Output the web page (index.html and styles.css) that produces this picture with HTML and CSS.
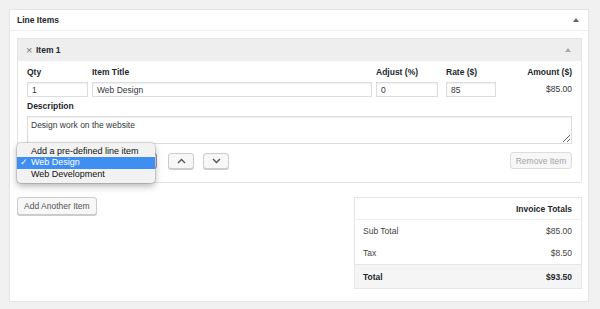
FILE: index.html
```html
<!DOCTYPE html>
<html lang="en">
<head>
    <meta charset="UTF-8">
    <meta name="viewport" content="width=device-width, initial-scale=1.0">
    <title>Line Items</title>
    <link rel="stylesheet" href="styles.css">
</head>
<body>
    <div class="panel">
        <div class="panel-head">
            <h2>Line Items</h2>
            <span class="toggle"></span>
        </div>
        <div class="panel-body">
            <div class="item">
                <div class="item-head">
                    <span class="remove-x">&times;</span>
                    <h3>Item 1</h3>
                    <span class="toggle light"></span>
                </div>
                <div class="item-body">
                    <div class="fields">
                        <label class="field"><span>Qty</span><input type="text" value="1"></label>
                        <label class="field"><span>Item Title</span><input type="text" value="Web Design"></label>
                        <label class="field adjust"><span>Adjust (%)</span><input type="text" value="0"></label>
                        <label class="field"><span>Rate ($)</span><input type="text" value="85"></label>
                        <div class="field amount"><span>Amount ($)</span><div class="amount-val">$85.00</div></div>
                    </div>
                    <label class="field desc"><span>Description</span><textarea>Design work on the website</textarea></label>
                    <div class="item-actions">
                        <div class="select">
                            <!-- the open menu covers the select's own label -->
                            <ul class="menu">
                                <li>Add a pre-defined line item</li>
                                <li class="active"><span class="check">&#10003;</span>Web Design</li>
                                <li>Web Development</li>
                            </ul>
                        </div>
                        <button class="btn move">
                            <svg width="9" height="6" viewBox="0 0 9 6"><polyline points="1,5 4.5,1.5 8,5" fill="none" stroke="#555" stroke-width="1.4"/></svg>
                        </button>
                        <button class="btn move">
                            <svg width="9" height="6" viewBox="0 0 9 6"><polyline points="1,1 4.5,4.5 8,1" fill="none" stroke="#555" stroke-width="1.4"/></svg>
                        </button>
                        <button class="btn disabled remove">Remove Item</button>
                    </div>
                </div>
            </div>

            <div class="footer-row">
                <button class="btn add">Add Another Item</button>
                <table class="totals">
                    <thead>
                        <tr><th colspan="2">Invoice Totals</th></tr>
                    </thead>
                    <tbody>
                        <tr><td>Sub Total</td><td class="num">$85.00</td></tr>
                        <tr><td>Tax</td><td class="num">$8.50</td></tr>
                        <tr class="grand"><td>Total</td><td class="num">$93.50</td></tr>
                    </tbody>
                </table>
            </div>
        </div>
    </div>
</body>
</html>
```

FILE: styles.css
```css
body {
    margin: 0;
    padding: 9px 0 0 9px;
    background-color: #f1f1f1;
    font-family: 'Liberation Sans', Arial, sans-serif;
    font-size: 8.5px;
    color: #23282d;
}
.panel {
    width: 580px;
    box-sizing: border-box;
    background-color: #ffffff;
    border: 1px solid #e5e5e5;
    box-shadow: 0 1px 1px rgba(0,0,0,0.04);
}
.panel-head {
    height: 20px;
    display: flex;
    align-items: center;
    justify-content: space-between;
    padding: 0 9px 0 7px;
    border-bottom: 1px solid #eeeeee;
}
h2, h3 {
    margin: 0;
    font-size: 8.5px;
    font-weight: bold;
}
.toggle {
    width: 0;
    height: 0;
    border-left: 3px solid transparent;
    border-right: 3px solid transparent;
    border-bottom: 4px solid #666;
}
.toggle.light {
    border-bottom-color: #aaa;
}
.panel-body {
    padding: 7px 6px 12px 7px;
}
.item {
    border: 1px solid #e5e5e5;
}
.item-head {
    height: 22px;
    display: flex;
    align-items: center;
    padding: 0 10px 0 8px;
    background-color: #eeeeee;
}
.item-head h3 {
    flex: 1;
}
.remove-x {
    width: 10px;
    color: #777;
    font-size: 11px;
    line-height: 1;
    margin-top: 1px;
}
.item-body {
    padding: 6px 9px 13px 9px;
}
.fields {
    display: grid;
    grid-template-columns: 61px 280px 66px 50px 1fr;
    column-gap: 4px;
}
.field {
    display: flex;
    flex-direction: column;
}
.field span {
    font-weight: bold;
    line-height: 11px;
    margin-bottom: 4px;
}
.field.adjust input {
    width: 62px;
}
.amount {
    align-items: flex-end;
}
.amount-val {
    line-height: 15px;
    color: #32373c;
}
input, textarea {
    height: 15px;
    margin: 0;
    padding: 0 4px;
    border: 1px solid #dddddd;
    box-shadow: inset 0 1px 2px rgba(0,0,0,0.07);
    box-sizing: border-box;
    font-family: inherit;
    font-size: 8.5px;
    color: #32373c;
    outline: none;
}
.desc {
    margin-top: 4px;
}
textarea {
    height: 28px;
    padding: 3px 3px;
    resize: vertical;
}
.item-actions {
    margin-top: 8px;
    height: 17px;
    display: flex;
    align-items: center;
}
.select {
    position: relative;
    width: 130px;
    height: 16px;
    box-sizing: border-box;
    border: 1px solid #bbb;
    border-right-color: #999;
    border-radius: 3px;
    background-color: #fff;
    margin-right: 11px;
}
.menu {
    position: absolute;
    left: -11px;
    top: -11px;
    width: 138px;
    margin: 0;
    padding: 3px 0;
    list-style: none;
    background-color: #f2f2f2;
    border-radius: 4px;
    box-shadow: 0 0 0 1px rgba(0,0,0,0.12), 0 3px 7px rgba(0,0,0,0.3);
    font-size: 9px;
    color: #111;
}
.menu li {
    position: relative;
    height: 11.5px;
    line-height: 11.5px;
    padding-left: 14px;
}
.menu li.active {
    background-color: #3f8ef2;
    color: #fff;
}
.check {
    position: absolute;
    left: 3px;
    top: 0;
}
.btn {
    height: 17px;
    padding: 0 7px;
    background-color: #f7f7f7;
    border: 1px solid #cccccc;
    border-radius: 3px;
    box-shadow: 0 1px 0 #cccccc;
    font-family: inherit;
    font-size: 8.5px;
    color: #555;
    cursor: pointer;
}
.btn.move {
    width: 26px;
    height: 16px;
    margin-right: 9px;
    display: flex;
    align-items: center;
    justify-content: center;
}
.btn.remove {
    margin-left: auto;
    width: 62px;
    padding: 0;
}
.btn.disabled {
    color: #a0a5aa;
    border-color: #dddddd;
    box-shadow: none;
}
.footer-row {
    margin-top: 14px;
    display: flex;
    justify-content: space-between;
    align-items: flex-start;
}
.btn.add {
    height: 18px;
    padding: 0 6px;
}
.totals {
    width: 228px;
    border-collapse: collapse;
    border: 1px solid #e5e5e5;
}
.totals th {
    height: 21px;
    text-align: right;
    padding: 0 9px;
    border-bottom: 1px solid #eeeeee;
}
.totals td {
    height: 22px;
    padding: 0 8px;
    color: #444;
}
.totals td.num {
    text-align: right;
    padding-right: 9px;
}
.totals tr.grand td {
    height: 23px;
    background-color: #f5f5f5;
    border-top: 1px solid #e5e5e5;
    font-weight: bold;
    color: #23282d;
}
```
